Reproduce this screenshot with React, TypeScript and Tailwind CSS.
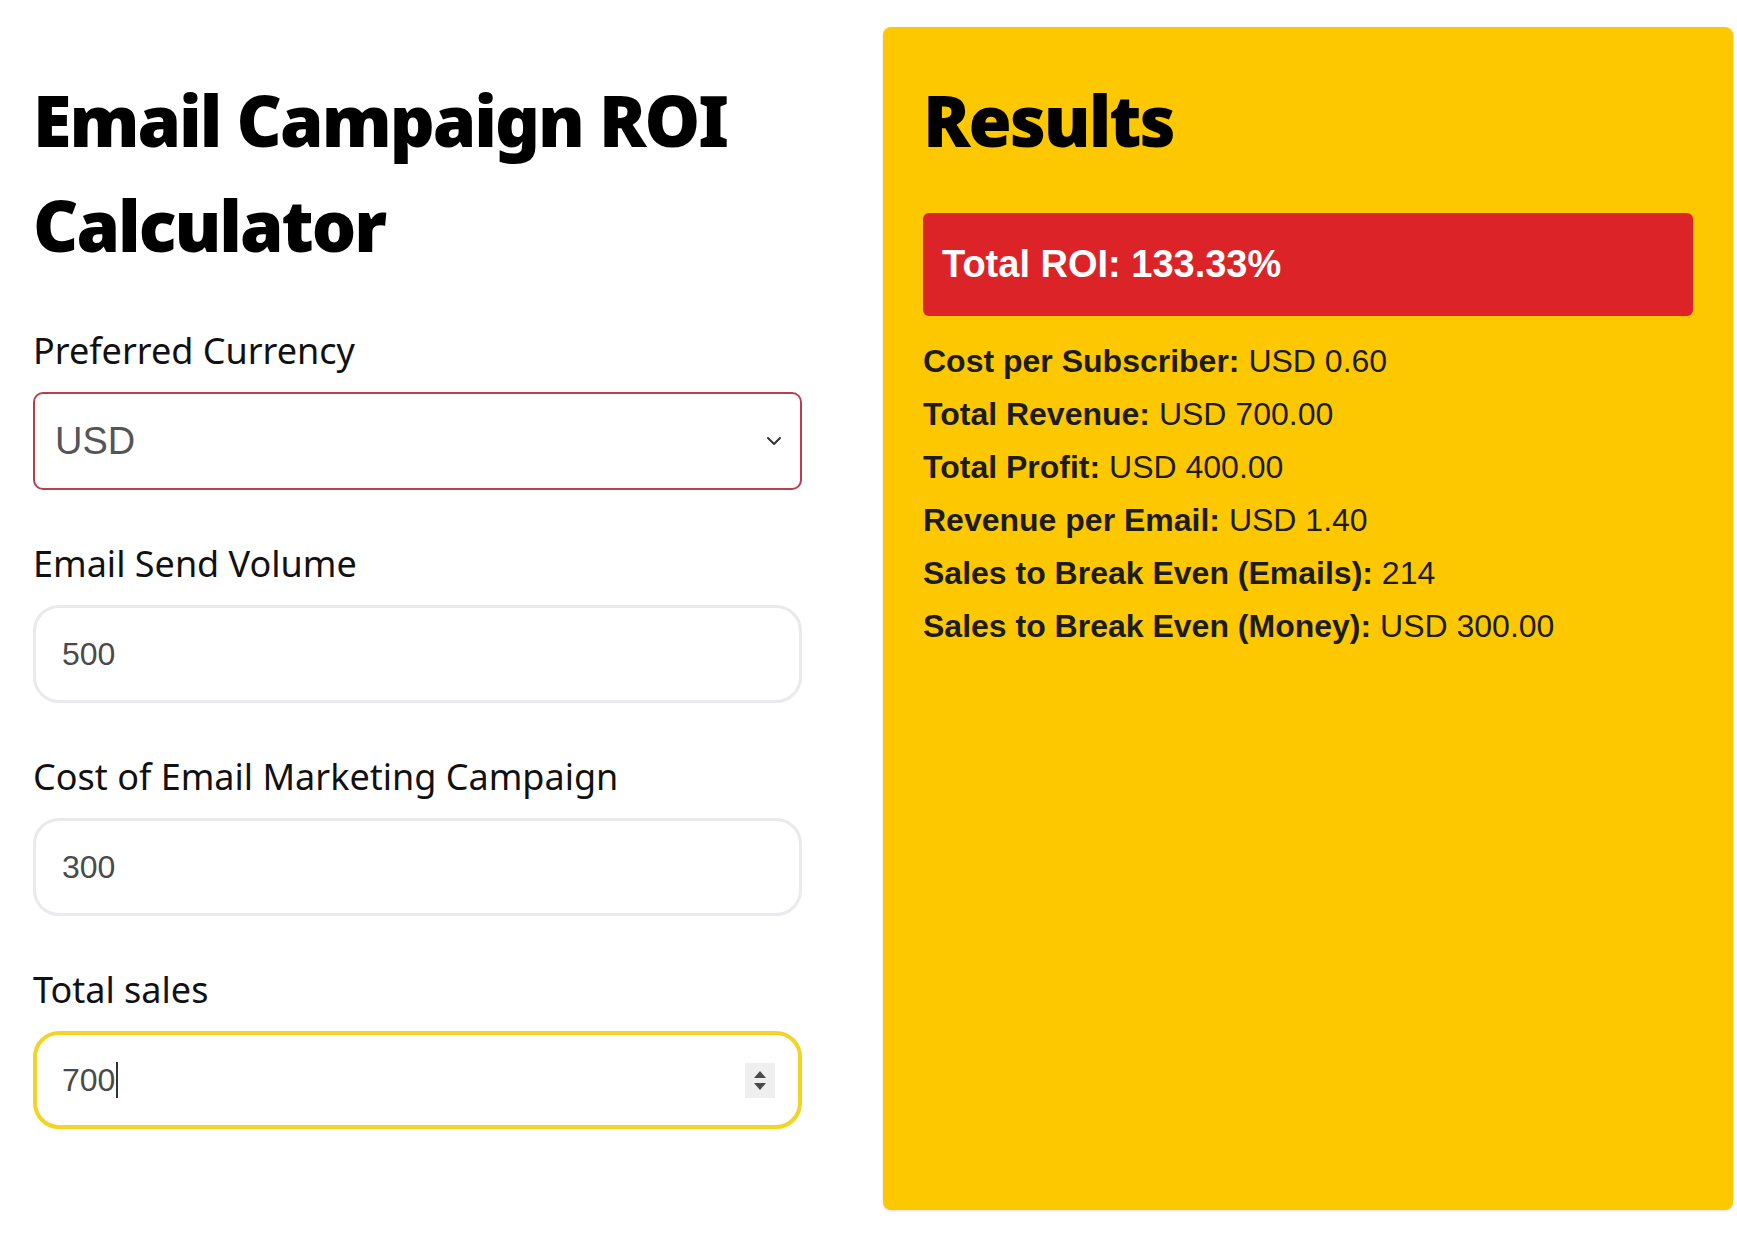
import React from "react";

const heading = { fontFamily: '"Noto Sans", "Open Sans", sans-serif' };
const arial = { fontFamily: '"Liberation Sans", Arial, sans-serif' };

function Label({ children }: { children: React.ReactNode }) {
  return (
    <div
      className="text-[36px] leading-[52px] text-[#111] tracking-[0px]"
      style={heading}
    >
      {children}
    </div>
  );
}

function TextBox({ value }: { value: string }) {
  return (
    <div className="mt-[15px] h-[98px] rounded-[26px] border-[3px] border-[#e9e9ee] bg-white flex items-center pl-[26px]">
      <span className="text-[32px] text-[#4a4a4a]" style={arial}>
        {value}
      </span>
    </div>
  );
}

const rows: [string, string][] = [
  ["Cost per Subscriber:", "USD 0.60"],
  ["Total Revenue:", "USD 700.00"],
  ["Total Profit:", "USD 400.00"],
  ["Revenue per Email:", "USD 1.40"],
  ["Sales to Break Even (Emails):", "214"],
  ["Sales to Break Even (Money):", "USD 300.00"],
];

export default function App() {
  return (
    <div className="w-[1737px] h-[1243px] bg-white flex pl-[33px] pt-[27px] gap-[81px] overflow-hidden">
      {/* Left column */}
      <div className="w-[769px] pt-[41px]">
        <h1
          className="text-[70px] leading-[105px] font-black text-black tracking-[-2px]"
          style={heading}
        >
          Email Campaign ROI
          <br />
          Calculator
        </h1>

        <div className="mt-[47px]">
          <Label>Preferred Currency</Label>
          <div className="mt-[15px] h-[98px] rounded-[10px] border-2 border-[#b8404a] bg-white flex items-center justify-between pl-[20px] pr-[18px]">
            <span className="text-[38px] text-[#555]" style={arial}>
              USD
            </span>
            <svg width="16" height="10" viewBox="0 0 16 10">
              <polyline
                points="2,2 8,8 14,2"
                fill="none"
                stroke="#333"
                strokeWidth="2"
                strokeLinecap="round"
                strokeLinejoin="round"
              />
            </svg>
          </div>
        </div>

        <div className="mt-[48px]">
          <Label>Email Send Volume</Label>
          <TextBox value="500" />
        </div>

        <div className="mt-[48px]">
          <Label>Cost of Email Marketing Campaign</Label>
          <TextBox value="300" />
        </div>

        <div className="mt-[48px]">
          <Label>Total sales</Label>
          <div className="mt-[15px] h-[98px] rounded-[26px] border-4 border-[#f2d424] bg-white flex items-center justify-between pl-[25px] pr-[23px]">
            <div className="flex items-center">
              <span className="text-[32px] text-[#4a4a4a]" style={arial}>
                700
              </span>
              <span className="ml-[1px] w-[2px] h-[36px] bg-[#333]" />
            </div>
            <div className="w-[30px] h-[35px] bg-[#efefef] flex flex-col items-center justify-center gap-[5px]">
              <svg width="12" height="7" viewBox="0 0 12 7">
                <polygon points="6,0 12,7 0,7" fill="#4a4a4a" />
              </svg>
              <svg width="12" height="7" viewBox="0 0 12 7">
                <polygon points="0,0 12,0 6,7" fill="#4a4a4a" />
              </svg>
            </div>
          </div>
        </div>
      </div>

      {/* Results panel */}
      <div className="w-[850px] h-[1183px] rounded-[8px] bg-[#fec800] px-[40px] pt-[41px] shadow-sm">
        <h2
          className="text-[70px] leading-[105px] font-black text-black tracking-[-2px]"
          style={heading}
        >
          Results
        </h2>
        <div className="mt-[40px] h-[103px] rounded-[6px] bg-[#dc2428] flex items-center pl-[19px]">
          <span className="text-[38px] font-bold text-white" style={arial}>
            Total ROI: 133.33%
          </span>
        </div>
        <div className="mt-[19px] text-[32px] leading-[53px] text-[#1c1c1c]" style={arial}>
          {rows.map(([k, v]) => (
            <div key={k}>
              <span className="font-bold">{k}</span> {v}
            </div>
          ))}
        </div>
      </div>
    </div>
  );
}
